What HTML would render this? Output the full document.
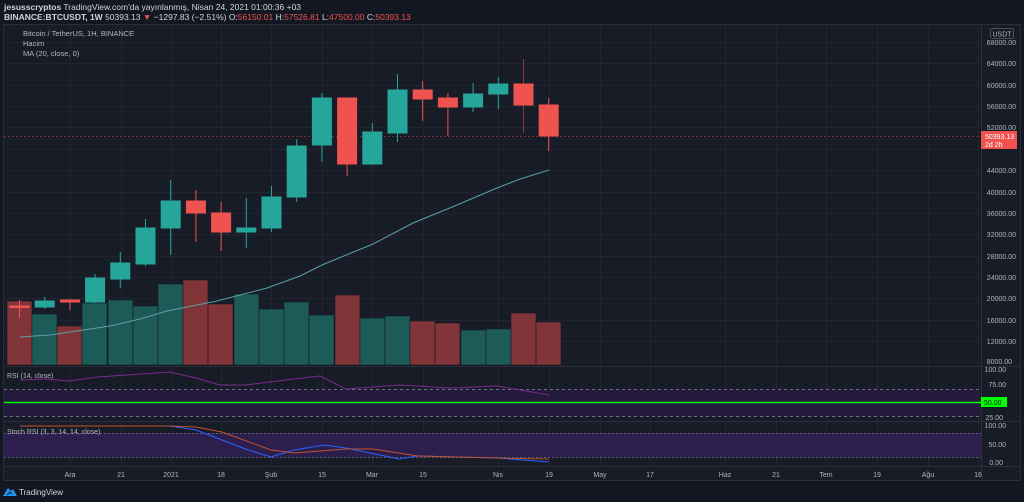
<!DOCTYPE html>
<html><head><meta charset="utf-8"><style>
html,body{margin:0;padding:0;background:#131722;width:1024px;height:502px;overflow:hidden}
svg{display:block;font-family:"Liberation Sans",sans-serif}
</style></head><body>
<svg width="1024" height="502" viewBox="0 0 1024 502" xmlns="http://www.w3.org/2000/svg">
<rect width="1024" height="502" fill="#131722"/>
<text x="4" y="10" font-size="8.5" fill="#d1d4dc"><tspan font-weight="bold">jesusscryptos</tspan> TradingView.com'da yayınlanmış, Nisan 24, 2021 01:00:36 +03</text>
<text x="4" y="20" font-size="8.5" fill="#d1d4dc"><tspan font-weight="bold">BINANCE:BTCUSDT, 1W</tspan> 50393.13 <tspan fill="#ef5350">▼</tspan> −1297.83 (−2.51%) O:<tspan fill="#ef5350">56150.01</tspan> H:<tspan fill="#ef5350">57526.81</tspan> L:<tspan fill="#ef5350">47500.00</tspan> C:<tspan fill="#ef5350">50393.13</tspan></text>
<rect x="3.5" y="24.5" width="1017" height="456" fill="#181c27" stroke="#2a2e39"/>
<g stroke="#21252f" stroke-width="1">
<line x1="4" x2="981" y1="42.5" y2="42.5"/><line x1="4" x2="981" y1="63.5" y2="63.5"/><line x1="4" x2="981" y1="85.5" y2="85.5"/><line x1="4" x2="981" y1="106.5" y2="106.5"/><line x1="4" x2="981" y1="127.5" y2="127.5"/><line x1="4" x2="981" y1="149.5" y2="149.5"/><line x1="4" x2="981" y1="170.5" y2="170.5"/><line x1="4" x2="981" y1="192.5" y2="192.5"/><line x1="4" x2="981" y1="213.5" y2="213.5"/><line x1="4" x2="981" y1="234.5" y2="234.5"/><line x1="4" x2="981" y1="256.5" y2="256.5"/><line x1="4" x2="981" y1="277.5" y2="277.5"/><line x1="4" x2="981" y1="298.5" y2="298.5"/><line x1="4" x2="981" y1="320.5" y2="320.5"/><line x1="4" x2="981" y1="341.5" y2="341.5"/>
<line x1="70.5" x2="70.5" y1="25" y2="466"/><line x1="121.5" x2="121.5" y1="25" y2="466"/><line x1="171.5" x2="171.5" y1="25" y2="466"/><line x1="221.5" x2="221.5" y1="25" y2="466"/><line x1="271.5" x2="271.5" y1="25" y2="466"/><line x1="322.5" x2="322.5" y1="25" y2="466"/><line x1="372.5" x2="372.5" y1="25" y2="466"/><line x1="423.5" x2="423.5" y1="25" y2="466"/><line x1="498.5" x2="498.5" y1="25" y2="466"/><line x1="549.5" x2="549.5" y1="25" y2="466"/><line x1="600.5" x2="600.5" y1="25" y2="466"/><line x1="650.5" x2="650.5" y1="25" y2="466"/><line x1="725.5" x2="725.5" y1="25" y2="466"/><line x1="776.5" x2="776.5" y1="25" y2="466"/><line x1="826.5" x2="826.5" y1="25" y2="466"/><line x1="877.5" x2="877.5" y1="25" y2="466"/><line x1="928.5" x2="928.5" y1="25" y2="466"/><line x1="978.5" x2="978.5" y1="25" y2="466"/>
</g>
<!-- volume -->
<g stroke="#151922" stroke-width="0.6">
<rect x="7" y="301" width="25" height="64" fill="#813539"/>
<rect x="32" y="314" width="25" height="51" fill="#1d5b58"/>
<rect x="57" y="326" width="25" height="39" fill="#813539"/>
<rect x="82" y="303" width="25" height="62" fill="#1d5b58"/>
<rect x="108" y="300" width="25" height="65" fill="#1d5b58"/>
<rect x="133" y="306" width="25" height="59" fill="#1d5b58"/>
<rect x="158" y="284" width="25" height="81" fill="#1d5b58"/>
<rect x="183" y="280" width="25" height="85" fill="#813539"/>
<rect x="208" y="304" width="25" height="61" fill="#813539"/>
<rect x="234" y="294" width="25" height="71" fill="#1d5b58"/>
<rect x="259" y="309" width="25" height="56" fill="#1d5b58"/>
<rect x="284" y="302" width="25" height="63" fill="#1d5b58"/>
<rect x="309" y="315" width="25" height="50" fill="#1d5b58"/>
<rect x="335" y="295" width="25" height="70" fill="#813539"/>
<rect x="360" y="318" width="25" height="47" fill="#1d5b58"/>
<rect x="385" y="316" width="25" height="49" fill="#1d5b58"/>
<rect x="410" y="321" width="25" height="44" fill="#813539"/>
<rect x="435" y="323" width="25" height="42" fill="#813539"/>
<rect x="461" y="330" width="25" height="35" fill="#1d5b58"/>
<rect x="486" y="329" width="25" height="36" fill="#1d5b58"/>
<rect x="511" y="313" width="25" height="52" fill="#813539"/>
<rect x="536" y="322" width="25" height="43" fill="#813539"/>
</g>
<line x1="4" x2="981" y1="136.5" y2="136.5" stroke="#8a3a3c" stroke-dasharray="2 2" stroke-width="0.8"/>
<polyline fill="none" stroke="#5e9ea6" stroke-width="1" points="20,337 50,335 110,326 140,319 167,311 217,301 267,288 300,276 322,265 373,244 413,223 457,205 497,188 520,179 549,170"/>
<!-- candles -->
<g stroke-width="1">
<g stroke="#ef5350" fill="#ef5350"><line x1="19.5" x2="19.5" y1="300" y2="318"/><rect x="10" y="306" width="19" height="1.5"/></g>
<g stroke="#26a69a" fill="#26a69a"><line x1="44.7" x2="44.7" y1="297" y2="309"/><rect x="35.2" y="301" width="19" height="6"/></g>
<g stroke="#ef5350" fill="#ef5350"><line x1="69.9" x2="69.9" y1="300" y2="310"/><rect x="60.4" y="300" width="19" height="2"/></g>
<g stroke="#26a69a" fill="#26a69a"><line x1="95.1" x2="95.1" y1="274" y2="303"/><rect x="85.6" y="278" width="19" height="24"/></g>
<g stroke="#26a69a" fill="#26a69a"><line x1="120.3" x2="120.3" y1="252" y2="288"/><rect x="110.8" y="263" width="19" height="16"/></g>
<g stroke="#26a69a" fill="#26a69a"><line x1="145.5" x2="145.5" y1="219" y2="266"/><rect x="136" y="228" width="19" height="36"/></g>
<g stroke="#26a69a" fill="#26a69a"><line x1="170.7" x2="170.7" y1="180" y2="255"/><rect x="161.2" y="201" width="19" height="27"/></g>
<g stroke="#ef5350" fill="#ef5350"><line x1="195.9" x2="195.9" y1="190" y2="242"/><rect x="186.4" y="201" width="19" height="12"/></g>
<g stroke="#ef5350" fill="#ef5350"><line x1="221.1" x2="221.1" y1="202" y2="251"/><rect x="211.6" y="213" width="19" height="19"/></g>
<g stroke="#26a69a" fill="#26a69a"><line x1="246.3" x2="246.3" y1="198" y2="248"/><rect x="236.8" y="228" width="19" height="4"/></g>
<g stroke="#26a69a" fill="#26a69a"><line x1="271.5" x2="271.5" y1="186" y2="232"/><rect x="262" y="197" width="19" height="31"/></g>
<g stroke="#26a69a" fill="#26a69a"><line x1="296.7" x2="296.7" y1="139" y2="202"/><rect x="287.2" y="146" width="19" height="51"/></g>
<g stroke="#26a69a" fill="#26a69a"><line x1="321.9" x2="321.9" y1="93" y2="162"/><rect x="312.4" y="98" width="19" height="47"/></g>
<g stroke="#ef5350" fill="#ef5350"><line x1="347.1" x2="347.1" y1="98" y2="176"/><rect x="337.6" y="98" width="19" height="66"/></g>
<g stroke="#26a69a" fill="#26a69a"><line x1="372.3" x2="372.3" y1="123" y2="165"/><rect x="362.8" y="132" width="19" height="32"/></g>
<g stroke="#26a69a" fill="#26a69a"><line x1="397.5" x2="397.5" y1="74" y2="142"/><rect x="388" y="90" width="19" height="43"/></g>
<g stroke="#ef5350" fill="#ef5350"><line x1="422.7" x2="422.7" y1="81" y2="121"/><rect x="413.2" y="90" width="19" height="9"/></g>
<g stroke="#ef5350" fill="#ef5350"><line x1="447.9" x2="447.9" y1="93" y2="136"/><rect x="438.4" y="98" width="19" height="9"/></g>
<g stroke="#26a69a" fill="#26a69a"><line x1="473.1" x2="473.1" y1="83" y2="112"/><rect x="463.6" y="94" width="19" height="13"/></g>
<g stroke="#26a69a" fill="#26a69a"><line x1="498.3" x2="498.3" y1="77" y2="109"/><rect x="488.8" y="84" width="19" height="10"/></g>
<g stroke="#ef5350" fill="#ef5350"><line x1="523.5" x2="523.5" y1="59" y2="133" stroke="#8a3a3c"/><rect x="514" y="84" width="19" height="21"/></g>
<g stroke="#ef5350" fill="#ef5350"><line x1="548.7" x2="548.7" y1="98" y2="151"/><rect x="539.2" y="105" width="19" height="31"/></g>
</g>
<text x="23" y="36" font-size="7.5" fill="#b2b5be">Bitcoin / TetherUS, 1H, BINANCE</text>
<text x="23" y="46" font-size="7.5" fill="#b2b5be">Hacim</text>
<text x="23" y="56" font-size="7.5" fill="#b2b5be">MA (20, close, 0)</text>
<!-- separators -->
<line x1="4" x2="1020" y1="366.5" y2="366.5" stroke="#2a2e39"/>
<line x1="4" x2="1020" y1="421.5" y2="421.5" stroke="#2a2e39"/>
<line x1="4" x2="1020" y1="466.5" y2="466.5" stroke="#2a2e39"/>
<!-- RSI -->
<rect x="4" y="389" width="977" height="28" fill="#231a3c"/>
<line x1="4" x2="981" y1="389.5" y2="389.5" stroke="#8c8aa0" stroke-dasharray="3 3" stroke-width="0.8"/>
<line x1="4" x2="981" y1="416.5" y2="416.5" stroke="#8c8aa0" stroke-dasharray="3 3" stroke-width="0.8"/>
<line x1="4" x2="981" y1="402.5" y2="402.5" stroke="#00ff00" stroke-width="1.6"/>
<polyline fill="none" stroke="#7b2a8c" stroke-width="1" points="20,380 46,379 69,381 98,377 170,372 196,378 220,385 245,385 294,379 320,376 346,389 399,385 451,388 497,386 549,395"/>
<text x="7" y="378" font-size="7" fill="#b2b5be">RSI (14, close)</text>
<!-- Stoch -->
<rect x="4" y="433" width="977" height="24" fill="#2c1f4e"/>
<line x1="4" x2="981" y1="433.5" y2="433.5" stroke="#77748c" stroke-dasharray="2 2" stroke-width="0.8"/>
<line x1="4" x2="981" y1="457.5" y2="457.5" stroke="#77748c" stroke-dasharray="2 2" stroke-width="0.8"/>
<polyline fill="none" stroke="#2962ff" stroke-width="1" points="20,426 170,426 196,430 248,450 271,457 294,450 324,445 346,448 399,459 418,456 497,458 549,462"/>
<polyline fill="none" stroke="#c0532e" stroke-width="1" points="20,426 170,426 196,427 222,432 271,450 294,453 346,449 373,449 418,456 497,458 549,459"/>
<text x="7" y="434" font-size="7" fill="#b2b5be">Stoch RSI (3, 3, 14, 14, close)</text>
<!-- price axis -->
<line x1="981.5" x2="981.5" y1="25" y2="480" stroke="#2a2e39"/>
<g font-size="7" fill="#b2b5be" text-anchor="end">
<text x="1016" y="45">68000.00</text><text x="1016" y="66">64000.00</text><text x="1016" y="88">60000.00</text><text x="1016" y="109">56000.00</text><text x="1016" y="130">52000.00</text><text x="1016" y="173">44000.00</text><text x="1016" y="195">40000.00</text><text x="1016" y="216">36000.00</text><text x="1016" y="237">32000.00</text><text x="1016" y="259">28000.00</text><text x="1016" y="280">24000.00</text><text x="1016" y="301">20000.00</text><text x="1016" y="323">16000.00</text><text x="1016" y="344">12000.00</text><text x="1012" y="364">8000.00</text>
<text x="1006" y="372">100.00</text><text x="1006" y="387">75.00</text><text x="1003" y="420">25.00</text>
<text x="1006" y="428">100.00</text><text x="1006" y="447">50.00</text><text x="1003" y="465">0.00</text>
</g>
<rect x="990.5" y="28.5" width="23" height="10" rx="2" fill="none" stroke="#4a4e59"/>
<text x="1002" y="36.5" font-size="7" fill="#b2b5be" text-anchor="middle">USDT</text>
<rect x="981" y="131" width="36" height="18" fill="#ef5350"/>
<text x="985" y="139" font-size="7" fill="#fff">50393.13</text>
<text x="985" y="147" font-size="7" fill="#fff">2d 2h</text>
<rect x="981" y="397" width="26" height="10" fill="#00ff00"/>
<text x="984" y="405" font-size="7" fill="#131722">50.00</text>
<!-- time axis -->
<g font-size="7" fill="#b2b5be" text-anchor="middle">
<text x="70" y="477">Ara</text><text x="121" y="477">21</text><text x="171" y="477">2021</text><text x="221" y="477">18</text><text x="271" y="477">Şub</text><text x="322" y="477">15</text><text x="372" y="477">Mar</text><text x="423" y="477">15</text><text x="498" y="477">Nis</text><text x="549" y="477">19</text><text x="600" y="477">May</text><text x="650" y="477">17</text><text x="725" y="477">Haz</text><text x="776" y="477">21</text><text x="826" y="477">Tem</text><text x="877" y="477">19</text><text x="928" y="477">Ağu</text><text x="978" y="477">16</text>
</g>
<path d="M3 496 L8 488 L11 491 L13 489 L17 496 Z" fill="#2196f3"/>
<path d="M7 495 L10 492 L12 494" fill="none" stroke="#131722" stroke-width="1"/>
<text x="19" y="495" font-size="8" fill="#d1d4dc">TradingView</text>
</svg>
</body></html>
